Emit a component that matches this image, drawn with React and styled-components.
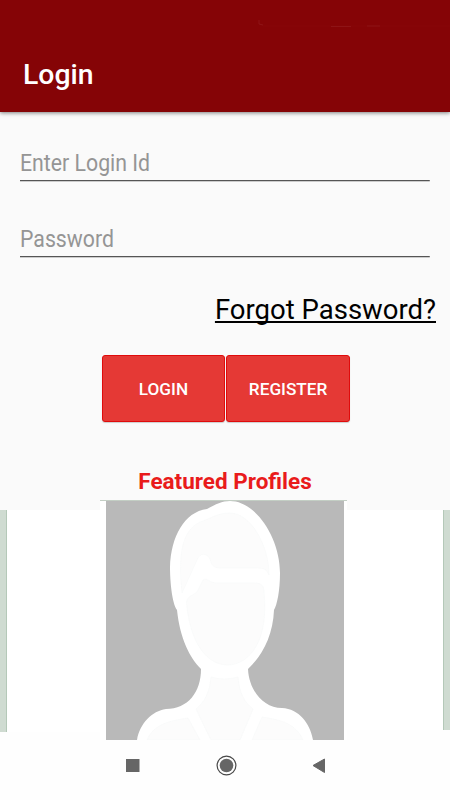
import React from 'react';
import styled, { createGlobalStyle } from 'styled-components';

const colors = {
  maroon: '#850406',
  red: '#e53935',
  redBorder: '#e00b0b',
  page: '#fafafa',
  hint: '#959595',
  sage: '#cfdbd1',
  nav: '#666666',
};

const GlobalStyle = createGlobalStyle`
  * {
    box-sizing: border-box;
  }
  body {
    margin: 0;
    background: #fefefe;
    font-family: Roboto, sans-serif;
  }
`;

const Screen = styled.div`
  display: flex;
  flex-direction: column;
  width: 450px;
  height: 800px;
  overflow: hidden;
  background: #fefefe;
`;

const AppBar = styled.header`
  display: flex;
  flex: none;
  align-items: flex-end;
  position: relative;
  height: 112px;
  padding: 0 23px 21px;
  background: ${colors.maroon};
  box-shadow: 0 1px 4px rgba(0, 0, 0, 0.5);
`;

const StatusMarks = styled.svg`
  position: absolute;
  top: 20px;
  left: 258px;
`;

const Title = styled.h1`
  margin: 0;
  color: #fff;
  font-size: 28.4px;
  font-weight: 500;
  line-height: 33px;
`;

const Main = styled.main`
  display: flex;
  flex: none;
  flex-direction: column;
  height: 388px;
  padding: 31px 20px 0;
  background: ${colors.page};
`;

/* slightly condensed, so the box is wider than the 410px it covers */
const Field = styled.input`
  flex: none;
  width: 443.2px;
  height: 39px;
  margin-bottom: 37px;
  padding: 2px 0 1px;
  border: 0;
  border-radius: 0;
  background: linear-gradient(#555 1px, #ccc 1px) bottom / 100% 2px no-repeat;
  font-family: inherit;
  font-size: 23px;
  outline: none;
  transform: scaleX(0.925);
  transform-origin: left;
  &::placeholder {
    color: ${colors.hint};
    opacity: 1;
  }
`;

const ForgotLink = styled.a`
  align-self: flex-end;
  margin: -1px -6px 0 0;
  color: #000;
  font-size: 27.5px;
  line-height: 32px;
  white-space: nowrap;
  text-decoration: underline;
  text-decoration-thickness: 2px;
  text-underline-offset: 2px;
  text-decoration-skip-ink: none;
`;

const Buttons = styled.div`
  display: flex;
  gap: 1px;
  margin: 29px 0 0 81.6px;
`;

const Button = styled.button`
  width: 123.7px;
  height: 67px;
  padding: 1px 0 0;
  border: 1px solid ${colors.redBorder};
  border-radius: 3px;
  background: ${colors.red};
  box-shadow: 0 1px 1px rgba(0, 0, 0, 0.18);
  color: #fff;
  font-family: inherit;
  font-size: 17.2px;
  font-weight: 500;
`;

const Heading = styled.h2`
  margin: 45px 0 0;
  color: #e91b1b;
  font-size: 22.5px;
  font-weight: 700;
  line-height: 28px;
  text-align: center;
`;

const Carousel = styled.section`
  display: grid;
  flex: none;
  grid-template-columns: 100px 247px 103px;
  height: 240px;
  background: #fefefe;
`;

const SideCard = styled.div`
  height: ${props => (props.$right ? 230 : 232)}px;
  border-top: 10px solid ${colors.page};
  background: #fff;
`;

const Edge = styled.div`
  width: 7px;
  height: 100%;
  margin-left: ${props => (props.$right ? 'auto' : 0)};
  background: ${colors.sage};
  border-style: solid;
  border-color: #b4c8b8;
  border-width: ${props => (props.$right ? '0 0 0 1px' : '0 1px 0 0')};
`;

const ProfileCard = styled.div`
  padding: 0 3px 0 6px;
  border-top: 1px solid #c3cec4;
  background: #fff;
`;

const Photo = styled.svg`
  display: block;
`;

const NavBar = styled.nav`
  display: flex;
  flex: none;
  justify-content: space-between;
  height: 60px;
  padding: 14px 119px 0 120px;
`;

const NavButton = styled.button`
  width: 24px;
  height: 24px;
  padding: 0;
  border: 0;
  background: none;
`;

const Avatar = () => (
  <Photo width="238" height="239" viewBox="0 0 238 239">
    <path fill="#b9b9b9" d="M0 0h238v239H0z" />
    <path
      fill="#fff"
      d="M31 239C34 222 46 210 60 208C82 208 95 191 95 168C84 157 74 138 71 109C66 102 64 80 64 66C65 36 78 11 101 8C110 3 116 0 124 0C150 0 174 37 174 72C174 90 171 104 168 109C167 135 156 155 142 168C143 189 157 207 176 207C193 208 204 222 207 239Z"
    />
    <g fill="#fcfcfc" stroke="#f8f9f9" strokeWidth="0.7">
      <path d="M76 92C72 52 76 30 94 21C104 18 111 12 124 12C145 12 163 45 163 74C160 67 157 67 149 67H116C106 67 106 64 104 58C101 52 94 51 91 59Z" />
      <path d="M81 106C79 96 84 96 91 91L97 79C101 76 103 82 111 82H148C156 82 158 85 158 91C163 139 144 164 121 164C96 163 84 134 81 106Z" />
      <path d="M105 176Q118 180 132 176C133 192 139 202 147 208L134 239H105L90 208C98 202 104 191 105 176Z" />
      <path d="M41 239C48 223 63 220 82 217L94 239Z" />
      <path d="M146 239L156 216C176 219 190 223 197 239Z" />
    </g>
  </Photo>
);

const App = () => (
  <>
    <GlobalStyle />
    <Screen>
      <AppBar>
        <StatusMarks width="192" height="10" fill="none" stroke="#941d1e" strokeOpacity="0.65">
          <path d="M1 0v4l4 1M73 6.5h20M109 6h13" />
          <path strokeOpacity="0.15" d="M5 6h187" />
        </StatusMarks>
        <Title>Login</Title>
      </AppBar>

      <Main>
        <Field type="text" placeholder="Enter Login Id" />
        <Field type="password" placeholder="Password" />
        <ForgotLink>Forgot Password?</ForgotLink>
        <Buttons>
          <Button>LOGIN</Button>
          <Button>REGISTER</Button>
        </Buttons>
        <Heading>Featured Profiles</Heading>
      </Main>

      <Carousel>
        <SideCard>
          <Edge />
        </SideCard>
        <ProfileCard>
          <Avatar />
        </ProfileCard>
        <SideCard $right>
          <Edge $right />
        </SideCard>
      </Carousel>

      <NavBar>
        <NavButton aria-label="Recent apps">
          <svg width="24" height="24">
            <rect x="6" y="5" width="13.5" height="13" fill={colors.nav} />
          </svg>
        </NavButton>
        <NavButton aria-label="Home">
          <svg width="24" height="24">
            <circle cx="12.5" cy="11.5" r="9.4" fill="none" stroke="#484848" strokeWidth="1.2" />
            <circle cx="12.5" cy="11.5" r="6.8" fill={colors.nav} />
          </svg>
        </NavButton>
        <NavButton aria-label="Back">
          <svg width="24" height="24">
            <path d="M6 11.5L17.5 5v13.5z" fill={colors.nav} stroke={colors.nav} strokeLinejoin="round" />
          </svg>
        </NavButton>
      </NavBar>
    </Screen>
  </>
);

export default App;
